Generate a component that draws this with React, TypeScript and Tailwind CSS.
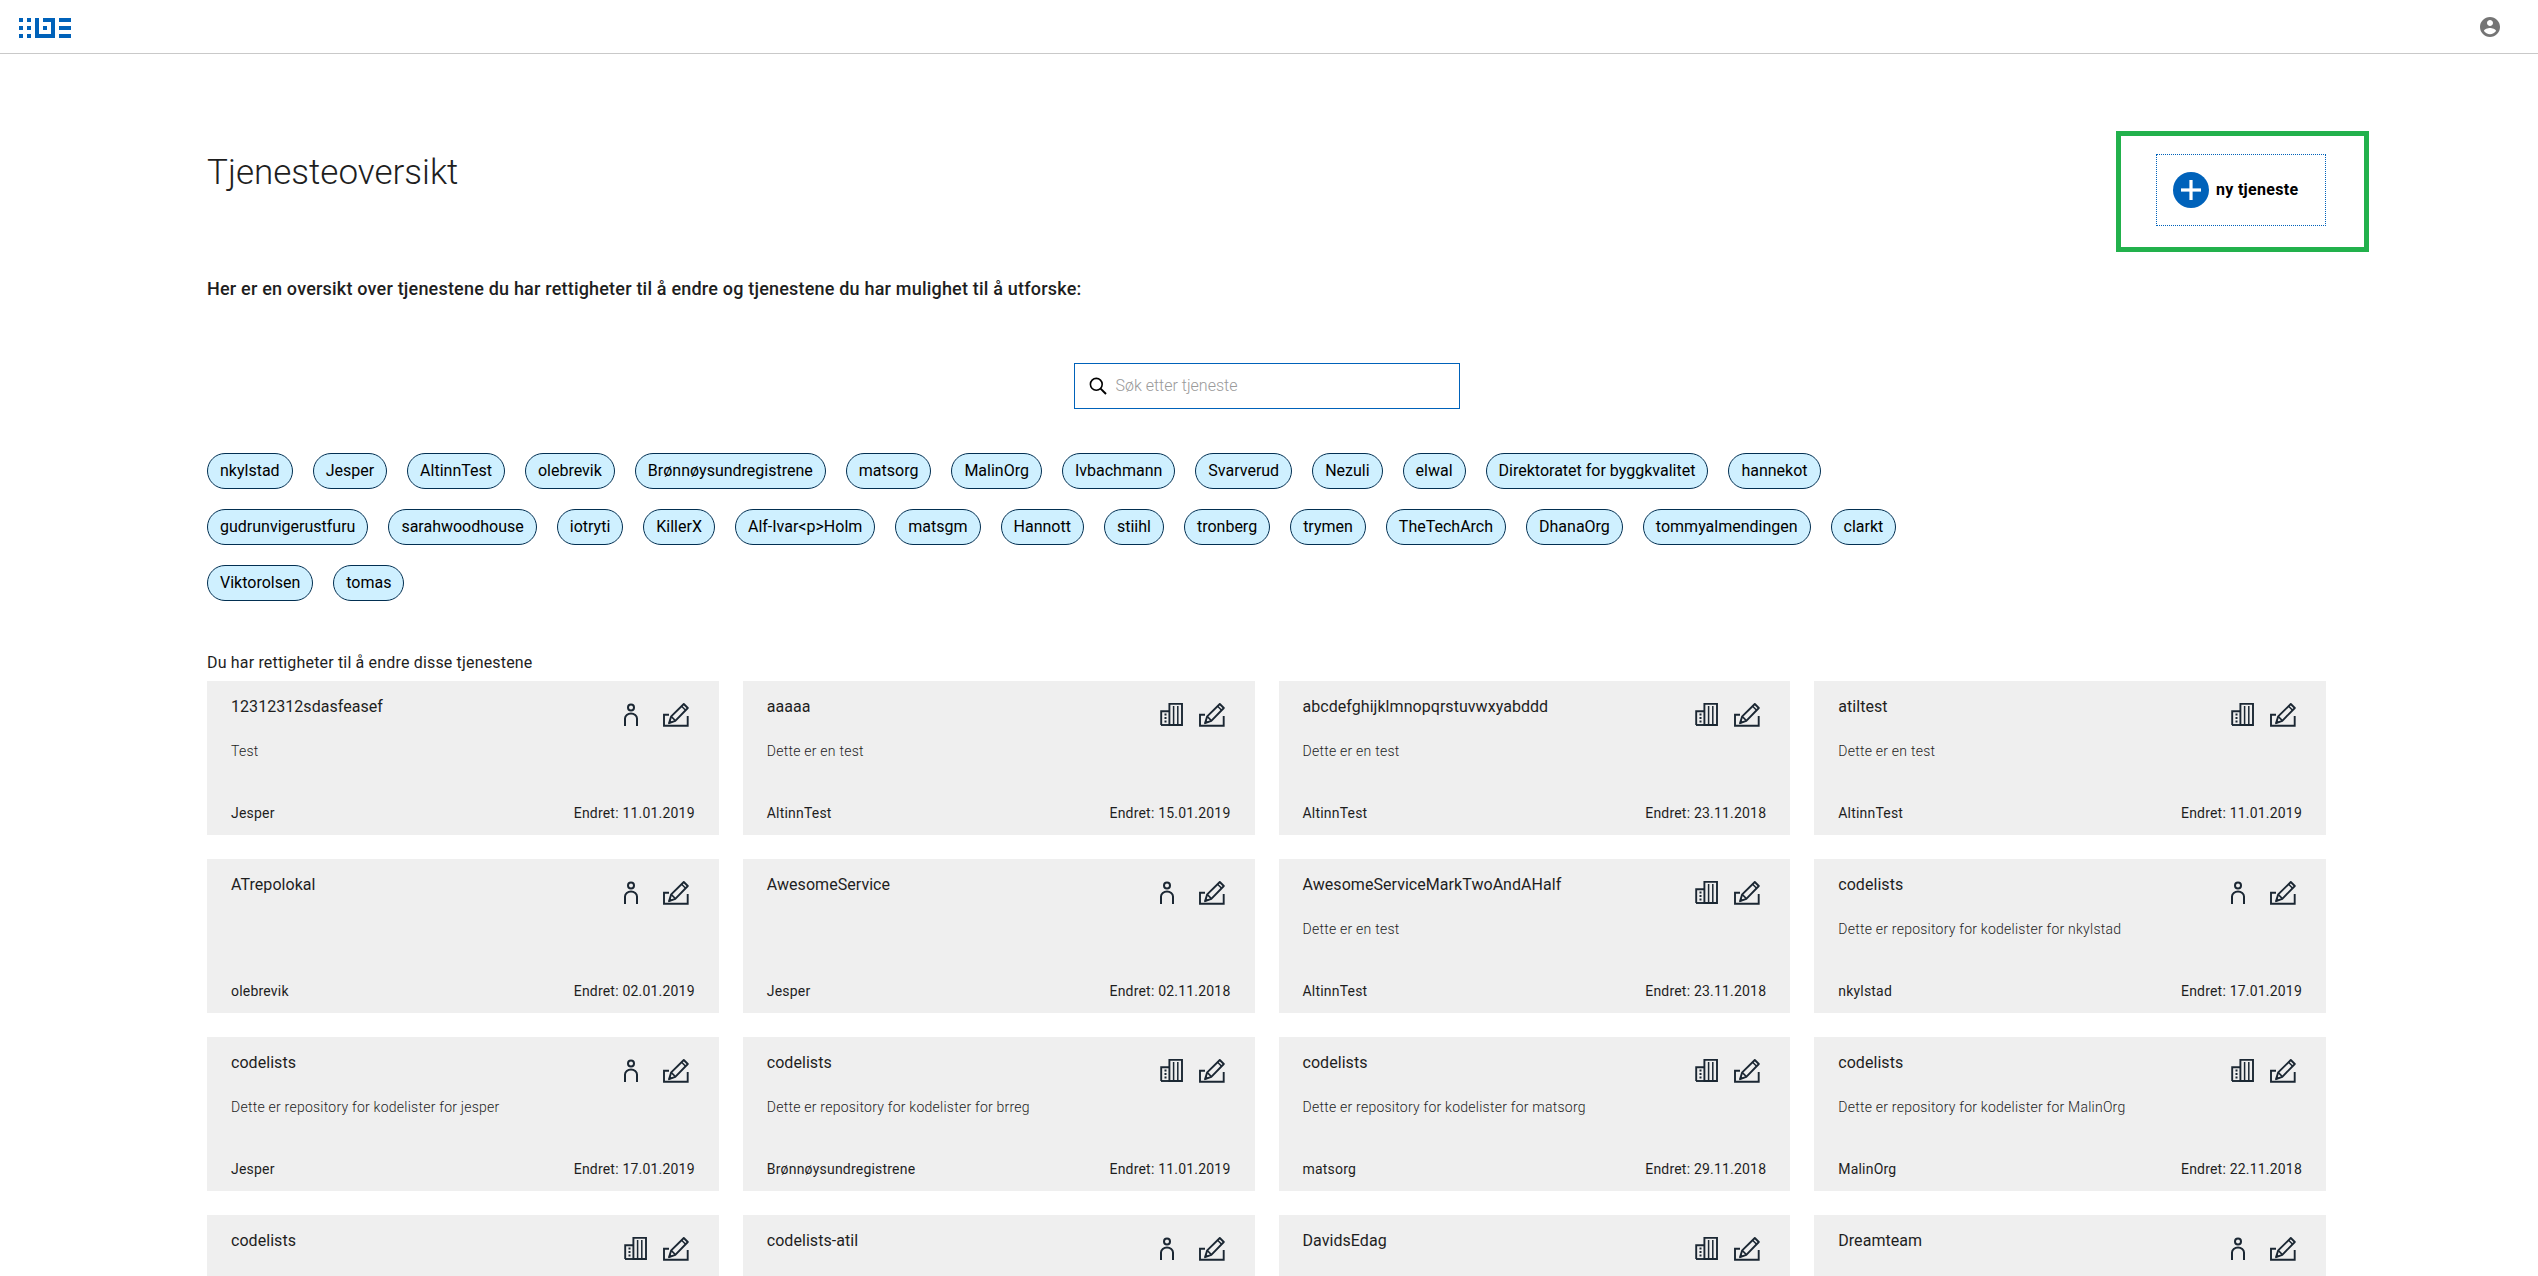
const owners = ["nkylstad","Jesper","AltinnTest","olebrevik","Brønnøysundregistrene","matsorg","MalinOrg","Ivbachmann","Svarverud","Nezuli","elwal","Direktoratet for byggkvalitet","hannekot","gudrunvigerustfuru","sarahwoodhouse","iotryti","KillerX","Alf-Ivar<p>Holm","matsgm","Hannott","stiihl","tronberg","trymen","TheTechArch","DhanaOrg","tommyalmendingen","clarkt","Viktorolsen","tomas"];

type Card = { t: string; d: string; o: string; e: string; org: boolean };
const cards: Card[] = [
  { t: "12312312sdasfeasef", d: "Test", o: "Jesper", e: "11.01.2019", org: false },
  { t: "aaaaa", d: "Dette er en test", o: "AltinnTest", e: "15.01.2019", org: true },
  { t: "abcdefghijklmnopqrstuvwxyabddd", d: "Dette er en test", o: "AltinnTest", e: "23.11.2018", org: true },
  { t: "atiltest", d: "Dette er en test", o: "AltinnTest", e: "11.01.2019", org: true },
  { t: "ATrepolokal", d: "", o: "olebrevik", e: "02.01.2019", org: false },
  { t: "AwesomeService", d: "", o: "Jesper", e: "02.11.2018", org: false },
  { t: "AwesomeServiceMarkTwoAndAHalf", d: "Dette er en test", o: "AltinnTest", e: "23.11.2018", org: true },
  { t: "codelists", d: "Dette er repository for kodelister for nkylstad", o: "nkylstad", e: "17.01.2019", org: false },
  { t: "codelists", d: "Dette er repository for kodelister for jesper", o: "Jesper", e: "17.01.2019", org: false },
  { t: "codelists", d: "Dette er repository for kodelister for brreg", o: "Brønnøysundregistrene", e: "11.01.2019", org: true },
  { t: "codelists", d: "Dette er repository for kodelister for matsorg", o: "matsorg", e: "29.11.2018", org: true },
  { t: "codelists", d: "Dette er repository for kodelister for MalinOrg", o: "MalinOrg", e: "22.11.2018", org: true },
  { t: "codelists", d: "", o: "", e: "", org: true },
  { t: "codelists-atil", d: "", o: "", e: "", org: false },
  { t: "DavidsEdag", d: "", o: "", e: "", org: true },
  { t: "Dreamteam", d: "", o: "", e: "", org: false },
];

function Logo() {
  return (
    <svg width="54" height="22" viewBox="0 0 54 22" fill="#0062ba" className="block">
      <rect x="0" y="0" width="4" height="4" /><rect x="8" y="0" width="4" height="4" />
      <rect x="0" y="8" width="4" height="4" /><rect x="8" y="8" width="4" height="4" />
      <rect x="0" y="16" width="4" height="4" /><rect x="8" y="16" width="4" height="4" />
      <path d="M16 0h4v16h12V4h-8V0h12v20H16z" />
      <rect x="24" y="8" width="4" height="4" />
      <rect x="40" y="0" width="12" height="4" /><rect x="40" y="8" width="12" height="4" /><rect x="40" y="16" width="12" height="4" />
    </svg>
  );
}

function PersonIcon() {
  return (
    <svg width="24" height="24" viewBox="0 0 24 24" fill="none" stroke="#1b2733" strokeWidth="2" className="block shrink-0">
      <circle cx="8" cy="4.6" r="3" />
      <path d="M2 23v-7.5a6 5 0 0 1 12 0V23" />
    </svg>
  );
}

function BuildingIcon() {
  return (
    <svg width="24" height="24" viewBox="0 0 24 24" fill="none" stroke="#1b2733" strokeWidth="1.9" className="block shrink-0">
      <path d="M2.2 22V8.2h8" />
      <path d="M10.4 22V.9h12.6V22z" />
      <path d="M2 22h21" />
      <path d="M14.6 3v19M18.8 3v19" strokeWidth="1.5" />
      <path d="M5.5 11.5h2M5.5 15h2M5.5 18.5h2" strokeWidth="2" />
    </svg>
  );
}

function PencilIcon() {
  return (
    <svg width="26" height="24" viewBox="0 0 26 24" fill="none" stroke="#1b2733" strokeWidth="1.9" className="block shrink-0">
      <path d="M6 11.8H1V22.7H24.7V13" />
      <path d="M6 20.2l2.2-6.8L20.8 1l4 4L12.3 17.8z" strokeLinejoin="round" />
      <path d="M8.4 13.6l4 4M18.6 3.2l4 4" strokeWidth="1.5" />
      <path d="M6 20.2l3-.9-2-2z" fill="#1b2733" strokeWidth="0.5" />
    </svg>
  );
}

function ServiceCard({ c }: { c: Card }) {
  return (
    <div className="bg-[#efefef] h-[154px] flex flex-col pt-[14px] pl-[24px] pr-[24px] pb-[12px]">
      <div className="flex justify-between items-start">
        <div className="text-[16px] leading-[24px] text-[#1e1e1e] tracking-[0.05px]">{c.t}</div>
        <div className="flex gap-[16px] mt-[8px] mr-[6px]">
          {c.org ? <BuildingIcon /> : <PersonIcon />}
          <PencilIcon />
        </div>
      </div>
      <div className="text-[14px] leading-[20px] font-light tracking-[0.24px] text-[#1e1e1e] mt-[14px]">{c.d}</div>
      <div className="mt-auto flex justify-between text-[14px] leading-[20px] tracking-[0.2px] text-[#1e1e1e]">
        <span>{c.o}</span>
        <span>{c.e ? `Endret: ${c.e}` : ""}</span>
      </div>
    </div>
  );
}

export default function App() {
  return (
    <div className="relative h-screen overflow-hidden bg-white font-[Roboto,sans-serif] text-[#1e1e1e]">
      <header className="h-[54px] border-b border-[#c9c9c9] flex items-center justify-between pl-[19px] pr-[36px]">
        <div className="self-start mt-[18px]"><Logo /></div>
        <svg width="24" height="24" viewBox="0 0 24 24" fill="#757575" className="block">
          <path d="M12 2C6.48 2 2 6.48 2 12s4.48 10 10 10 10-4.48 10-10S17.52 2 12 2zm0 3c1.66 0 3 1.34 3 3s-1.34 3-3 3-3-1.34-3-3 1.34-3 3-3zm0 14.2c-2.5 0-4.71-1.28-6-3.22.03-1.99 4-3.08 6-3.08 1.99 0 5.97 1.09 6 3.08-1.29 1.94-3.5 3.22-6 3.22z" />
        </svg>
      </header>

      <main className="pl-[207px] pr-[212px] pt-[96px]">
        <div className="flex justify-between items-start">
          <h1 className="text-[35px] leading-[45px] font-light text-[#1e1e1e]">Tjenesteoversikt</h1>
          <div className="mt-[4px] w-[170px] h-[72px] border border-dotted border-[#0062ba] flex items-center pl-[16px] gap-[7px]">
            <span className="w-[36px] h-[36px] rounded-full bg-[#0062ba] flex items-center justify-center">
              <svg width="20" height="20" viewBox="0 0 20 20" fill="#fff" className="block">
                <rect x="8.4" y="0" width="3.2" height="20" /><rect x="0" y="8.4" width="20" height="3.2" />
              </svg>
            </span>
            <span className="text-[16px] font-bold tracking-[0.3px] text-black whitespace-nowrap">ny tjeneste</span>
          </div>
        </div>

        <p className="mt-[49px] text-[18px] leading-[27px] font-medium tracking-[0.2px] text-[#1e1e1e]">
          Her er en oversikt over tjenestene du har rettigheter til å endre og tjenestene du har mulighet til å utforske:
        </p>

        <div className="mt-[61px] flex justify-center">
          <div className="w-[386px] h-[46px] border border-[#0062ba] flex items-center pl-[13px] gap-[8px]">
            <svg width="20" height="20" viewBox="0 0 20 20" fill="none" stroke="#000" className="block">
              <circle cx="8.3" cy="8.3" r="5.9" strokeWidth="1.6" />
              <path d="M12.6 12.6L18 18" strokeWidth="2" />
            </svg>
            <span className="text-[16px] font-light text-[#9a9a9a]">Søk etter tjeneste</span>
          </div>
        </div>

        <div className="mt-[44px] w-[1750px] flex flex-wrap gap-x-[20px] gap-y-[20px]">
          {owners.map((o) => (
            <span key={o} className="h-[36px] px-[12px] rounded-[18px] border border-[#022f51] bg-[#cff0ff] text-[16px] leading-[34px] text-black whitespace-nowrap">
              {o}
            </span>
          ))}
        </div>

        <div className="mt-[50px] text-[16px] leading-[24px] tracking-[0.17px] text-[#1e1e1e]">Du har rettigheter til å endre disse tjenestene</div>

        <div className="mt-[6px] grid grid-cols-4 gap-x-[24px] gap-y-[24px]">
          {cards.map((c, i) => <ServiceCard key={i} c={c} />)}
        </div>
      </main>

      <div className="absolute left-[2116px] top-[131px] w-[253px] h-[121px] border-[5px] border-[#22b14c]" />
    </div>
  );
}
